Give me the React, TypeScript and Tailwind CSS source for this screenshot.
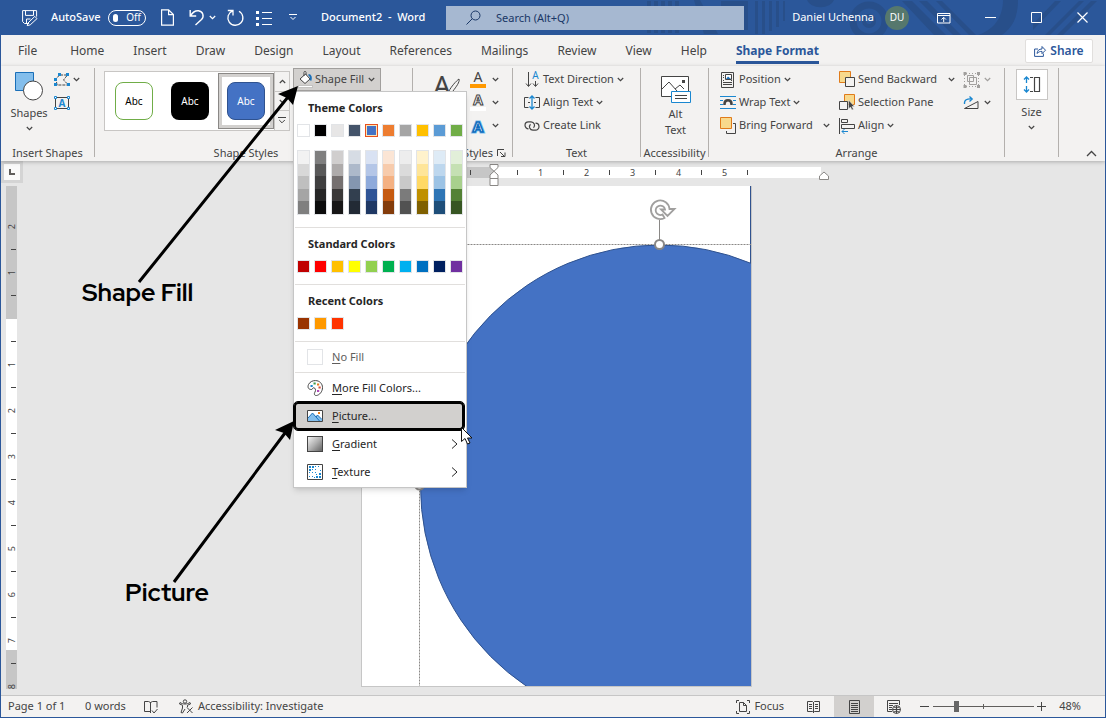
import type { ReactNode } from "react";

type Children = { children?: ReactNode };

function Icon({ w = 16, h = 16, children }: Children & { w?: number; h?: number }) {
  return (
    <svg width={w} height={h} viewBox={`0 0 ${w} ${h}`} fill="none" stroke="currentColor" className="shrink-0 overflow-visible" aria-hidden="true">
      {children}
    </svg>
  );
}

function Chevron() {
  return (
    <Icon w={7} h={5}>
      <path d="M.8 1 3.5 3.7 6.2 1" strokeWidth="1.2" />
    </Icon>
  );
}

function TitleArt() {
  return (
    <svg width="470" height="35" viewBox="636 0 470 35" className="pointer-events-none absolute top-0 right-0" aria-hidden="true">
      <g fill="#284f8a">
        <path d="M648 1h4v32h-4zM655 1h4v32h-4zM662 1h4v32h-4zM669 1h4v32h-4zM676 1h4v32h-4zM695 0h6l18 34h-14zM722 1h27v29h-27z" />
        <path d="M756 1h3v33h-3zM763 1h3v33h-3zM770 1h3v30h-3zM777 1h3v26h-3zM784 1h2v20h-2z" />
        <path d="M808 0a14 10 0 0 0 27 0z" />
        <path d="M903 1h10l34 34h-12zM920 1h8l34 34h-8zM937 1h6l34 34h-7z" />
        <path d="M1004 0h15c0 18-6 28-16 35h-24c16-5 25-18 25-35z" />
        <path d="M1046 35 1080 1h5l-34 34zM1058 35l34-34h6l-34 34zM1034 24l22-23h6l-28 29z" />
      </g>
      <g fill="none" stroke="#284f8a">
        <circle cx="870" cy="21" r="16" strokeWidth="7" />
        <circle cx="870" cy="21" r="5" strokeWidth="4" />
      </g>
    </svg>
  );
}

function TitleBar() {
  return (
    <header className="relative flex h-[35px] shrink-0 items-center bg-[#2b579a] text-[11px] text-white">
      <TitleArt />
      <button aria-label="Save" className="ml-[21px]">
        <Icon w={17}>
          <path d="M7 13.5H2.5L.6 11.6V.6h14v6M3.5.6v4.8h8V.6M4.5 13.5V9h4M6 13l6.8-6.6 2.2 2.2-6.8 6.3-3 .7z" />
        </Icon>
      </button>
      <span className="ml-3 w-[50px] whitespace-nowrap font-medium">AutoSave</span>
      <button role="switch" aria-checked="false" aria-label="AutoSave" className="ml-[7px] flex h-4 w-[38px] items-center gap-2 rounded-full border border-white px-1 text-[10px]">
        <span className="size-2 rounded-full bg-white" />
        Off
      </button>
      <button aria-label="New" className="ml-[15px]">
        <Icon w={13} h={17}>
          <path d="M.6.8h7l4.8 4.8v10.6H.6zM7.6.8v4.8h4.8" strokeWidth="1.2" />
        </Icon>
      </button>
      <button aria-label="Undo" className="ml-[15px]">
        <Icon w={16} h={17}>
          <path d="M1.2 1v6h6M1.5 6.8C3.500 3.500 6.500 1.500 9.500 1.800c4.500.5 6 5.500 3 8.700L6.500 16" strokeWidth="1.4" />
        </Icon>
      </button>
      <button aria-label="Undo list" className="ml-1"><Chevron /></button>
      <button aria-label="Redo" className="ml-[11px]">
        <Icon w={17} h={17}>
          <path d="M.8 1.500H6v5M5.600 1.800A7.500 7.500 0 1 0 12 2.200" strokeWidth="1.300" />
        </Icon>
      </button>
      <button aria-label="Bullets" className="ml-3">
        <Icon>
          <path d="M6 2.500h10M6 8.500h10M6 14.500h10" />
          <path d="M0 1h3v3H0zM0 7h3v3H0zM0 13h3v3H0z" fill="currentColor" stroke="none" />
        </Icon>
      </button>
      <button aria-label="Customize quick access toolbar" className="ml-[17px]">
        <Icon w={8} h={7}>
          <path d="M0 .5h8M1.500 3 4 5.500 6.500 3" />
        </Icon>
      </button>
      <span className="ml-6 w-[125px] whitespace-pre font-medium">Document2  -  Word</span>
      <div className="relative h-6 w-[298px]">
        <input aria-label="Search" placeholder="Search (Alt+Q)" className="size-full bg-[#a6b8d1] pl-[50px] placeholder:text-[#1a3766]" />
        <div className="pointer-events-none absolute top-1 left-5 text-[#1a3766]">
          <Icon>
            <circle cx="9.500" cy="5.500" r="4.500" />
            <path d="M6.300 8.700.5 14.500" />
          </Icon>
        </div>
      </div>
      <div className="relative ml-auto flex items-center">
        <span className="whitespace-nowrap">Daniel Uchenna</span>
        <span className="ml-[11px] flex size-6 items-center justify-center rounded-full bg-[#56786d] text-[10px]">DU</span>
        <button aria-label="Ribbon display options" className="ml-7">
          <Icon w={14} h={12}>
            <path d="M.5 1.500h12.500v9.500H.5zM.5 3.500h12.500M6.700 10V5.500M4.500 7.500l2.200-2.200 2.200 2.200" />
          </Icon>
        </button>
        <button aria-label="Minimize" className="ml-[34px]">
          <Icon w={11} h={11}><path d="M0 5.500h11" /></Icon>
        </button>
        <button aria-label="Maximize" className="ml-[35px]">
          <Icon w={11} h={11}><path d="M.5.5h10v10H.5z" /></Icon>
        </button>
        <button aria-label="Close" className="mr-[17px] ml-[35px]">
          <Icon w={11} h={11}><path d="m.5.5 10 10m0-10-10 10" strokeWidth="1.200" /></Icon>
        </button>
      </div>
    </header>
  );
}

const tabs = ["Home", "Insert", "Draw", "Design", "Layout", "References", "Mailings", "Review", "View", "Help"];

function Tabs() {
  return (
    <nav className="flex h-[31px] shrink-0 items-center pr-3 pl-[17px] text-xs">
      <button className="mr-[33px]">File</button>
      <div className="flex gap-[29px]">
        {tabs.map((tab) => (
          <button key={tab}>{tab}</button>
        ))}
        <button className="relative font-bold whitespace-nowrap text-[#2b579a]">
          Shape Format
          <span className="absolute inset-x-0 top-[18px] h-[3px] bg-[#2b579a]" />
        </button>
      </div>
      <button className="ml-auto flex h-6 w-[68px] items-center justify-center gap-1 rounded-xs border border-[#e1dfdd] bg-white font-semibold text-[#2b579a]">
        <Icon w={12} h={12}>
          <path d="M4 4H.6v7.400h8.800V8.500M3 8.500c.3-3 2-4.500 5-4.500V1.500l3.500 3.700L8 8.700V6.400C6 6.300 4.300 7 3 8.500z" />
        </Icon>
        Share
      </button>
    </nav>
  );
}

function Group({ label, className, launcher, children }: Children & { label: string; className: string; launcher?: boolean }) {
  return (
    <section className={`flex shrink-0 flex-col justify-between border-r border-[#b3b0ad] ${className}`}>
      <div>{children}</div>
      <div className="flex items-center justify-center text-center leading-2 whitespace-nowrap">
        <span className="flex-1">{label}</span>
        {launcher && (
          <button aria-label={`${label} options`} className="-mt-px w-[15px]">
            <Icon w={9} h={8}>
              <path d="M.5 7V.5H7M3 3l4.500 4.500M8 3.500v4H4" />
            </Icon>
          </button>
        )}
      </div>
    </section>
  );
}

function Command({ icon, label, arrow, labelClass = "" }: { icon: ReactNode; label?: string; arrow?: boolean; labelClass?: string }) {
  return (
    <button className="flex h-[23px] items-center gap-[3px] text-left whitespace-nowrap">
      {icon}
      {label && <span className={labelClass}>{label}</span>}
      {arrow && <Chevron />}
    </button>
  );
}

function InsertShapes() {
  return (
    <Group label="Insert Shapes" className="w-[94px]">
      <div className="flex gap-1.5 pl-[9px]">
        <button className="flex w-[38px] flex-col items-center pt-1">
          <Icon w={28} h={29}>
            <path d="M.5.5h18v18H.5z" fill="#83beec" stroke="#1a6fb8" />
            <circle cx="18" cy="18.500" r="9.500" fill="#fff" stroke="#444" />
          </Icon>
          <span className="my-1">Shapes</span>
          <Chevron />
        </button>
        <div>
          <Command
            arrow
            icon={
              <Icon w={16} h={14}>
                <path d="M3 12 2 6l3.500-4h8L9.500 7l5 5H3" strokeDasharray="3 1" />
                <path d="M4 0h3v3H4zM12 0h3v3h-3zM0 5h3v3H0zM0 10h3v3H0zM13 10h3v3h-3z" fill="#1a87d0" stroke="none" />
              </Icon>
            }
          />
          <Command
            icon={
              <Icon w={16} h={14}>
                <path d="M1.500 1.500h13v11h-13z" />
                <path d="M.5.5h2v2h-2zM13.500.5h2v2h-2zM.5 11.500h2v2h-2zM13.500 11.500h2v2h-2z" fill="#fff" stroke="#1a87d0" />
                <text x="8" y="11" textAnchor="middle" fontSize="10" fontWeight="700" fill="#1a87d0" stroke="none">A</text>
              </Icon>
            }
          />
        </div>
      </div>
    </Group>
  );
}

const themeColors = [
  ["#ffffff", "#f2f2f2", "#d8d8d8", "#bfbfbf", "#a5a5a5", "#7f7f7f"],
  ["#000000", "#7f7f7f", "#595959", "#3f3f3f", "#262626", "#0c0c0c"],
  ["#e7e6e6", "#d0cece", "#aeabab", "#757070", "#3a3838", "#171616"],
  ["#44546a", "#d6dce4", "#adb9ca", "#8496b0", "#323f4f", "#222a35"],
  ["#4472c4", "#d9e2f3", "#b4c6e7", "#8eaadb", "#2f5496", "#1f3864"],
  ["#ed7d31", "#fbe5d5", "#f7cbac", "#f4b183", "#c55a11", "#833c0b"],
  ["#a5a5a5", "#ededed", "#dbdbdb", "#c9c9c9", "#7b7b7b", "#525252"],
  ["#ffc000", "#fff2cc", "#fee599", "#ffd965", "#bf9000", "#7f6000"],
  ["#5b9bd5", "#deebf6", "#bdd7ee", "#9cc3e5", "#2e75b5", "#1e4e79"],
  ["#70ad47", "#e2efd9", "#c5e0b3", "#a8d08d", "#538135", "#375623"],
];
const standardColors = ["#c00000", "#ff0000", "#ffc000", "#ffff00", "#92d050", "#00b050", "#00b0f0", "#0070c0", "#002060", "#7030a0"];
const recentColors = ["#993300", "#ff9900", "#ff3300"];

function Swatches({ colors, selected }: { colors: string[]; selected?: string }) {
  return (
    <div className="flex gap-1 pl-[3px]">
      {colors.map((color) => (
        <button
          key={color}
          aria-label={color}
          className={`size-[13px] border ${color === selected ? "border-[#e8501c] inset-ring inset-ring-[#fbe3b5]" : "border-[#e2e4e7]"}`}
          style={{ backgroundColor: color }}
        />
      ))}
    </div>
  );
}

function MenuItem({ icon, label, arrow, className = "h-7 w-full" }: { icon: ReactNode; label: string; arrow?: boolean; className?: string }) {
  return (
    <button className={`flex items-center gap-[9px] pr-2 pl-[13px] text-left ${className}`}>
      {icon}
      <span className="flex-1">
        <u className="underline-offset-2">{label[0]}</u>
        {label.slice(1)}
      </span>
      {arrow && (
        <Icon w={7} h={10}>
          <path d="m1 .5 5 4.500-5 4.500" />
        </Icon>
      )}
    </button>
  );
}

function FillMenu() {
  return (
    <div className="absolute top-[23px] left-0 z-10 w-[174px] border border-[#c6c6c6] bg-white pb-px text-[11px] text-[#262626] shadow-md">
      <h2 className="flex h-8 items-center pl-3.5 font-bold">Theme Colors</h2>
      <Swatches colors={themeColors.map((shades) => shades[0])} selected="#4472c4" />
      <div className="mt-[13px] mb-3 flex gap-1 pl-[3px]">
        {themeColors.map(([base, ...shades]) => (
          <div key={base} className="flex h-[65px] w-[13px] flex-col border border-[#e2e4e7]">
            {shades.map((shade) => (
              <button key={shade} aria-label={shade} className="flex-1" style={{ backgroundColor: shade }} />
            ))}
          </div>
        ))}
      </div>
      <hr className="mx-px border-[#e1dfdd]" />
      <h2 className="flex h-8 items-center pl-3.5 font-bold">Standard Colors</h2>
      <Swatches colors={standardColors} />
      <hr className="mx-px mt-[11px] border-[#e1dfdd]" />
      <h2 className="flex h-8 items-center pl-3.5 font-bold">Recent Colors</h2>
      <Swatches colors={recentColors} />
      <hr className="mx-px mt-[11px] border-[#e1dfdd]" />
      <MenuItem className="h-[30px] w-full text-[#605e5c]" label="No Fill" icon={<span className="size-4 border border-[#e2e4e7]" />} />
      <hr className="mx-px mb-px border-[#e1dfdd]" />
      <MenuItem
        label="More Fill Colors..."
        icon={
          <Icon>
            <path d="M4.500 9.500C1 9.500.5 7 1.500 4.500 3 1.500 6 .5 8.500.6c4 0 7 3 7 7s-3 7.500-6 7.900c-2.500.2-2.500-2-1.500-3.500 1.500-2.500-.5-5-2-4-1 .7-.5 1.500-1.500 1.500z" fill="#fff" stroke="#444" />
            <path d="M3.500 5h2.200v2H3.500z" fill="#1a87d0" stroke="none" />
            <path d="M6.500 2.500h2.200v2H6.500z" fill="#3a9b4c" stroke="none" />
            <path d="M10 3.500h2.200v2H10z" fill="#e87d1c" stroke="none" />
            <path d="M11.500 6.500h2.200v2h-2.200z" fill="#d84a3a" stroke="none" />
            <path d="M10 10h2.200v2H10z" fill="#b046b8" stroke="none" />
          </Icon>
        }
      />
      <MenuItem
        className="h-7 w-[170px] rounded-sm bg-[#d2d0ce] inset-ring-2 inset-ring-black outline outline-black"
        label="Picture..."
        icon={
          <Icon h={12}>
            <path d="M.5.5h15v11H.5z" fill="#fff" stroke="#444" />
            <path d="m1 8 4.500-5 3.300 3.500L10.500 5 15 9.500V11H1z" fill="#83beec" stroke="none" />
            <path d="m1 8 4.500-5 7 8M9 7l1.500-2L15 9.500" stroke="#1a6fb8" />
            <path d="M11 2h2v2h-2z" fill="#e87d1c" stroke="none" />
          </Icon>
        }
      />
      <MenuItem
        arrow
        label="Gradient"
        icon={<span className="size-4 border border-[#444] bg-linear-to-br from-[#f3f3f3] via-[#b0b0b0] to-[#666]" />}
      />
      <MenuItem
        arrow
        label="Texture"
        icon={
          <Icon>
            <path d="M.5.5h15v15H.5z" fill="#fff" stroke="#444" />
            <path
              d="M2 2h2v2H2zM5 2h2v2H5zM8 2h1v1H8zM11 2h1v1h-1zM2 5h2v2H2zM5 5h1v1H5zM2 8h1v1H2zM8 5h1v1H8zM13 6h1v1h-1zM5 8h1v1H5zM8 8h1v1H8zM12 9h2v2h-2zM9 12h2v2H9zM12 12h2v2h-2zM9 10h1v1H9zM5 12h1v1H5zM7 13h1v1H7zM2 12h1v1H2z"
              fill="#1a87d0"
              stroke="none"
            />
          </Icon>
        }
      />
    </div>
  );
}

function ShapeStyles() {
  return (
    <Group label="Shape Styles" launcher className="w-[318px]">
      <div className="flex gap-[3px] pl-[9px]">
        <div className="mt-[3px] flex h-[60px] w-[186px] border border-[#c8c6c4] bg-white">
          <div className="flex flex-1 items-center text-[10px]">
            <button className="mx-[10px] size-[38px] rounded-lg border border-[#70ad47] text-black">Abc</button>
            <button className="mr-[9px] ml-2 size-[38px] rounded-lg bg-black text-white">Abc</button>
            <button className="flex size-14 items-center justify-center border border-[#8a8886] bg-white inset-ring-3 inset-ring-[#d2d0ce]">
              <span className="flex size-[38px] shrink-0 items-center justify-center rounded-lg border border-[#2f528f] bg-[#4472c4] text-white">Abc</span>
            </button>
          </div>
          <div className="flex w-[15px] flex-col divide-y divide-[#c8c6c4] border-l border-[#c8c6c4] bg-[#f3f2f1]">
            <button aria-label="Previous row" className="flex flex-1 items-center justify-center">
              <Icon w={7} h={5}><path d="M.8 4 3.500 1.300 6.200 4" strokeWidth="1.200" /></Icon>
            </button>
            <button aria-label="Next row" className="flex flex-1 items-center justify-center"><Chevron /></button>
            <button aria-label="More styles" className="flex flex-1 items-center justify-center">
              <Icon w={8} h={7}><path d="M0 .5h8M1.200 3 4 5.800 6.800 3" /></Icon>
            </button>
          </div>
        </div>
        <div className="relative">
          <button className="flex h-[23px] w-[88px] items-center gap-px border border-[#a19f9d] bg-[#d2d0ce] pl-[3px] whitespace-nowrap">
            <Icon w={17} h={17}>
              <path d="m3 8 5.500-5 4.500 5-5 4.500zM7 5V1.500C7 0 9 0 9 1.500V4" fill="#fff" stroke="#444" />
              <path d="M11.500 4c2 0 3 2.500 2 5.500" stroke="#1a6fb8" strokeWidth="2" />
              <path d="M1.500 14.500h14v2h-14z" fill="#fff" stroke="#a19f9d" strokeWidth=".5" />
            </Icon>
            Shape Fill
            <span className="ml-[3px]"><Chevron /></span>
          </button>
          <FillMenu />
        </div>
      </div>
    </Group>
  );
}

function WordArtStyles() {
  return (
    <Group label="WordArt Styles" launcher className="w-[100px]">
      <div className="flex items-start justify-between pr-[13px] pl-5">
        <button aria-label="Quick styles" className="pt-1.5">
          <Icon w={28} h={28}>
            <text x="0" y="22" fontSize="28" fill="currentColor" stroke="none">A</text>
            <path d="M16 17c2-4 7-10 10-12 1 3-3 8-6 12-1 2-3 3-5 3" fill="#f3f2f1" />
          </Icon>
        </button>
        <div>
          <button aria-label="Text fill" className="flex h-[23px] items-center gap-1.5">
            <Icon w={16} h={17}>
              <text x="8" y="11" textAnchor="middle" fontSize="14" fill="currentColor" stroke="none">A</text>
              <path d="M0 13h16v4H0z" fill="#ff9900" stroke="none" />
            </Icon>
            <Chevron />
          </button>
          <button aria-label="Text outline" className="flex h-[23px] items-center gap-1.5">
            <Icon w={16} h={17}>
              <text x="8" y="11" textAnchor="middle" fontSize="14" fontWeight="700" fill="#fff" stroke="#444">A</text>
              <path d="M0 13h16v4H0z" fill="#fff" stroke="none" />
            </Icon>
            <Chevron />
          </button>
          <button aria-label="Text effects" className="flex h-[23px] items-center gap-1.5">
            <Icon>
              <text x="8" y="13.500" textAnchor="middle" fontSize="15" fontWeight="700" fill="#fff" stroke="#7cc0ee" strokeWidth="3">A</text>
              <text x="8" y="13.500" textAnchor="middle" fontSize="15" fontWeight="700" fill="#fff" stroke="#0f6cbd" strokeWidth="1.500">A</text>
            </Icon>
            <Chevron />
          </button>
        </div>
      </div>
    </Group>
  );
}

function TextGroup() {
  return (
    <Group label="Text" className="w-[128px]">
      <div className="flex flex-col items-start pl-[11px]">
        <Command
          arrow
          label="Text Direction"
          icon={
            <Icon w={16} h={17}>
              <path d="M4.500 1v14M2 12.500l2.500 3 2.500-3M11.500 10v5M9 12.500l2.500 3 2.500-3" />
              <text x="11.500" y="8" textAnchor="middle" fontSize="10" fill="#1a87d0" stroke="none">A</text>
            </Icon>
          }
        />
        <Command
          arrow
          label="Align Text"
          icon={
            <Icon w={16} h={15}>
              <path d="M4.500 2.500h-4v10h4M11.500 2.500h4v10h-4M4 7.500h2M10 7.500h2" />
              <path d="M8 1v13M5.500 3.500 8 1l2.500 2.500M5.500 11.500 8 14l2.500-2.500" stroke="#1a87d0" strokeWidth="1.300" />
            </Icon>
          }
        />
        <Command
          label="Create Link"
          icon={
            <Icon w={16} h={12}>
              <path d="M4.500 8.800a3.500 3.500 0 0 1 0-7H7a3.500 3.500 0 0 1 2.500 6M11.500 3.200a3.500 3.500 0 0 1 0 7H9a3.500 3.500 0 0 1-2.500-6" strokeWidth="1.200" />
            </Icon>
          }
        />
      </div>
    </Group>
  );
}

function Arrange() {
  return (
    <Group label="Arrange" className="w-[296px]">
      <div className="flex pl-[11px]">
        <div className="flex w-[119px] flex-col items-start">
          <Command
            arrow
            label="Position"
            icon={
              <Icon>
                <path d="M1.500.5h12v15h-12zM3 8.500h1M3 10.500h9M3 12.500h9M3 3.500h1M3 5.500h1M11 8.500h1" />
                <path d="M5.500 2.500h6v5h-6z" fill="#fff" stroke="#444" />
                <path d="M6 7 8 4.500 11 7z" fill="#1a6fb8" stroke="none" />
              </Icon>
            }
          />
          <Command
            arrow
            label="Wrap Text"
            icon={
              <Icon h={15}>
                <path d="M0 1.500h16M0 5.500h3M13 5.500h3M0 9.500h3M13 9.500h3M0 13.500h16" stroke="#1a87d0" />
                <path d="M4.500 10V9c0-5 7-5 7 0v1" stroke="#444" strokeWidth="2.500" />
              </Icon>
            }
          />
          <Command
            arrow
            labelClass="w-[81px]"
            label="Bring Forward"
            icon={
              <Icon w={16} h={17}>
                <path d="M.5.5h11v11H.5z" fill="#f8d98c" stroke="#e07b1a" />
                <path d="M13 6.500h2.500v10h-9V14" />
              </Icon>
            }
          />
        </div>
        <div className="flex w-[124px] flex-col items-start">
          <Command
            arrow
            labelClass="w-[87px]"
            label="Send Backward"
            icon={
              <Icon w={16} h={17}>
                <path d="M.5.5h11v11H.5z" fill="#f8d98c" stroke="#e07b1a" />
                <path d="M6.500 6.500h9v9h-9z" fill="#f3f2f1" />
              </Icon>
            }
          />
          <Command
            label="Selection Pane"
            icon={
              <Icon w={16} h={17}>
                <path d="M5.500.5h10v10h-10z" fill="#f8d98c" stroke="#e07b1a" />
                <path d="M.5 7.500h8v8h-8z" fill="#f3f2f1" />
                <path d="M9.500 6v9l2-2 1.500 3 1.500-.700-1.500-2.800h2.500z" fill="#444" stroke="#f3f2f1" strokeWidth=".5" />
              </Icon>
            }
          />
          <Command
            arrow
            label="Align"
            icon={
              <Icon>
                <path d="M.5 0v16M2.500 1.500h6v3h-6zM2.500 6.500h13v4h-13z" />
                <path d="M9 13.500H3M5.500 11 3 13.500 5.500 16" stroke="#1a87d0" />
              </Icon>
            }
          />
        </div>
        <div className="flex flex-col items-start">
          <span className="text-[#a19f9d]">
            <Command
              arrow
              icon={
                <Icon w={18}>
                  <path d="M4.500 3.500h6v6h-6zM6.500 5.500h7v7h-7z" />
                  <path d="M3 1.500h11M3 14.500h11M1.500 3v10M15.500 3v10" strokeDasharray="1 2" />
                  <path d="M.5 0h3v3h-3zM14 0h3v3h-3zM.5 13h3v3h-3zM14 13h3v3h-3z" fill="currentColor" stroke="none" />
                </Icon>
              }
            />
          </span>
          <Command
            arrow
            icon={
              <Icon w={18} h={14}>
                <path d="M1.500 12.500h13.500v-7z" />
                <path d="M1.500 8C1 4 4 2.500 9 3M6.500.5 9.200 3 6.500 5.500" stroke="#1a87d0" strokeWidth="1.300" />
              </Icon>
            }
          />
        </div>
      </div>
    </Group>
  );
}

function Ribbon() {
  return (
    <div className="relative z-10 flex h-[95px] shrink-0 pt-0.5 pb-1 text-[11px] shadow-[0_1px_4px_rgba(0,0,0,0.25)]">
      <InsertShapes />
      <ShapeStyles />
      <WordArtStyles />
      <TextGroup />
      <Group label="Accessibility" className="w-[68px]">
        <button className="flex w-full flex-col items-center pt-2 pl-0.5 leading-4">
          <Icon w={30} h={28}>
            <path d="M.5.5h27v20H.5z" fill="#fff" />
            <path d="m1 13 7-7 8 9M14 13l5-4 4 4" />
            <path d="M21 4h3v3h-3z" fill="#444" stroke="none" />
            <path d="M10.500 15.500h19v11h-19z" fill="#fff" stroke="#1a87d0" />
            <path d="M14 19.500h12M14 22.500h12" />
          </Icon>
          <span className="mt-0.5">Alt</span>
          <span>Text</span>
        </button>
      </Group>
      <Arrange />
      <section className="w-[54px] shrink-0 border-r border-[#b3b0ad]">
        <button className="flex w-full flex-col items-center">
          <span className="mt-px flex h-[31px] w-8 items-center justify-center border border-[#c8c6c4] bg-white">
            <Icon w={16} h={17}>
              <path d="M2.500 1v6M0 3.500 2.500 1 5 3.500M2.500 10v6M0 13.500 2.500 16 5 13.500" stroke="#1a87d0" strokeWidth="1.300" />
              <path d="M6 1.500h3M6 15.500h3M10.500 1.500h5v14h-5z" strokeWidth="1.200" />
            </Icon>
          </span>
          <span className="my-1">Size</span>
          <Chevron />
        </button>
      </section>
      <button aria-label="Collapse the ribbon" className="mr-2 ml-auto self-end">
        <Icon w={11} h={7}><path d="m1 6 4.500-4.500L10 6" strokeWidth="1.300" /></Icon>
      </button>
    </div>
  );
}

const verticalMarks = ["2", "", "1", "", "·", "", "1", "", "2", "", "3", "", "4", "", "5", "", "6", "", "7", "", "8"];

function Document() {
  return (
    <main className="flex min-h-0 flex-1 overflow-hidden bg-[#e6e6e6]">
      <div className="flex w-[22px] shrink-0 flex-col text-[9px]">
        <div className="flex h-[22px] shrink-0 items-center justify-center bg-[#d4d4d4]">
          <span className="flex size-4 items-center justify-center bg-[#fafafa] text-[#605e5c]">
            <Icon w={6} h={6}><path d="M1 0v5h5" strokeWidth="2" /></Icon>
          </span>
        </div>
        <div className="mt-[3px] mb-[6px] ml-[5px] min-h-0 w-[11px] flex-1 overflow-hidden bg-[linear-gradient(#c6c6c6_133px,#fff_133px,#fff_464px,#c6c6c6_464px)] pt-[29px]">
          {verticalMarks.map((mark, i) => (
            <div key={i} className="flex h-[23px] items-center justify-center">
              {mark === "" ? <span className="ml-1 h-px w-[5px] bg-[#444]" /> : mark === "·" ? null : <span className="-rotate-90">{mark}</span>}
            </div>
          ))}
        </div>
      </div>
      <div className="flex flex-1 flex-col pt-[6px] pl-[338px]">
        <div className="relative flex h-[11px] w-[460px] shrink-0 text-[9px]">
          <div className="flex w-[133px] items-center justify-end bg-[#c6c6c6] pr-3">
            <span className="flex w-[23px] justify-center"><span className="h-[5px] w-px bg-[#444]" /></span>
          </div>
          <div className="flex flex-1 items-center bg-white pl-3">
            {["", "1", "", "2", "", "3", "", "4", "", "5", ""].map((mark, i) => (
              <span key={i} className="flex w-[23px] justify-center">{mark || <span className="h-[5px] w-px bg-[#444]" />}</span>
            ))}
          </div>
          <div className="absolute -top-[3px] left-32 text-[#8a8886]">
            <Icon w={10} h={23}>
              <path d="M1 .5h8v3L1 11v3.500h8V11L1 3.500zM1 14.500h8v7H1z" fill="#fff" />
            </Icon>
          </div>
          <div className="absolute top-1 -right-2 text-[#8a8886]">
            <Icon w={10} h={10}><path d="M.5 8.500V5L5 1l4.500 4v3.500z" fill="#fff" /></Icon>
          </div>
        </div>
        <div className="mt-[8px] mb-2 min-h-0 w-[391px] flex-1 overflow-hidden border border-t-0 border-[#c6c6c6] bg-white">
          <svg width="389" height="500" viewBox="362 186 389 500" fill="none" aria-hidden="true">
            <ellipse cx="659.500" cy="486" rx="239" ry="241" fill="#4472c4" stroke="#2f528f" />
            <path d="M750.500 186v77" stroke="#2f528f" />
            <path d="M419.500 244.500H751M419.500 244.500V686" stroke="#8a8886" strokeDasharray="2 1" />
            <path d="M659.500 220v20" stroke="#8a8886" />
            <circle cx="659.500" cy="244.500" r="4.500" fill="#fff" stroke="#8a8886" strokeWidth="2" />
            <circle cx="419.500" cy="485" r="4.500" fill="#fff" stroke="#8a8886" strokeWidth="2" />
            <path d="M664.500 218a9.300 9.300 0 1 1 5-9h5l-7 7-6.500-6.500h4a4.700 4.700 0 1 0-2.500 5z" fill="#fff" stroke="#a09f9e" strokeWidth="1.800" />
          </svg>
        </div>
      </div>
    </main>
  );
}

function StatusBar() {
  return (
    <footer className="flex h-[22px] shrink-0 items-center border-t border-[#c6c6c6] text-[11px] whitespace-nowrap">
      <span className="ml-[7px] w-[77px]">Page 1 of 1</span>
      <span className="w-[59px]">0 words</span>
      <button aria-label="Proofing">
        <Icon w={14} h={14}>
          <path d="M6.500 2v11M6.500 11.500H.5v-10h4l2 1 2-1H13v6M8 10.500l2 2.500 3.500-4" />
        </Icon>
      </button>
      <button className="ml-[21px] flex items-center gap-1">
        <Icon w={15} h={15}>
          <circle cx="6" cy="2.500" r="1.700" />
          <path d="M1 3.500c3 2 7 2 10 0l.5 1.500-3 1.200v2M1 3.500.5 5l3 1.200V9L2 13.500l1.500.5L6 10M8 8.500l5.500 5.500M13.500 8.500 8 14" />
        </Icon>
        Accessibility: Investigate
      </button>
      <button className="ml-auto flex items-center gap-[3px]">
        <Icon w={14} h={14}>
          <path d="M3 .5H.5V3M11 .5h2.500V3M3 13.500H.5V11M11 13.500h2.500V11M3.500 2.500h4l3 3v6h-7zM7.500 2.500v3h3" />
        </Icon>
        <span className="w-8">Focus</span>
      </button>
      <button aria-label="Read mode" className="ml-[22px]">
        <Icon w={13} h={13}>
          <path d="M6.500 2v11M.5 1.500h5l1 1 1-1h5v10h-5l-1 1-1-1h-5zM2 4.500h3M2 6.500h3M2 8.500h3M8 4.500h3M8 6.500h3M8 8.500h3" />
        </Icon>
      </button>
      <button aria-label="Print layout" className="ml-3.5 flex h-full w-10 items-center justify-center bg-[#d2d0ce]">
        <Icon w={11} h={14}>
          <path d="M.5.5h10v13H.5zM2 3.500h7M2 5.500h7M2 7.500h7M2 9.500h7M2 11.500h7" />
        </Icon>
      </button>
      <button aria-label="Web layout" className="ml-[13px]">
        <Icon w={14} h={14}>
          <path d="M5 11.500H.5V.5h12V5M2 3.500h9M2 5.500h4M2 7.500h3M2 9.500h3" />
          <circle cx="9.500" cy="9.500" r="4" fill="#f3f2f1" />
          <path d="M5.500 9.500h8M9.500 5.500v8M7 7c1.500 1 3.500 1 5 0M7 12c1.500-1 3.500-1 5 0" />
        </Icon>
      </button>
      <button aria-label="Zoom out" className="ml-[19px]">
        <Icon w={9} h={9}><path d="M0 4.500h9" /></Icon>
      </button>
      <div className="relative ml-1 flex w-[101px] items-center">
        <span className="absolute left-[50px] h-[5px] w-px bg-[#605e5c]" />
        <input
          type="range"
          aria-label="Zoom"
          min={0}
          max={100}
          defaultValue={22}
          className="relative h-[11px] w-full appearance-none bg-transparent [&::-webkit-slider-runnable-track]:h-px [&::-webkit-slider-runnable-track]:bg-[#605e5c] [&::-webkit-slider-thumb]:-mt-[5px] [&::-webkit-slider-thumb]:h-[11px] [&::-webkit-slider-thumb]:w-[5px] [&::-webkit-slider-thumb]:appearance-none [&::-webkit-slider-thumb]:bg-[#666]"
        />
      </div>
      <button aria-label="Zoom in" className="ml-[3px]">
        <Icon w={9} h={9}><path d="M0 4.500h9M4.500 0v9" /></Icon>
      </button>
      <button className="mr-6 ml-[13px]">48%</button>
    </footer>
  );
}

function Callouts() {
  return (
    <div className="pointer-events-none absolute inset-y-0 right-0 -left-px z-20 font-['Red_Hat_Display','Inter',sans-serif] text-[25px] leading-7 font-bold text-black">
      <svg width="480" height="600" className="absolute top-0 left-0" aria-hidden="true">
        <path d="M139 282 288 97M174 582 285 433" stroke="#000" strokeWidth="3" />
        <path d="m298 86-20 8 9 4 6 7zM294 421l-19 9 9 3 6 7z" />
        <path d="M461.500 427.500v14l3.500-3 2.500 5.500 2.500-1-2.500-5h4.500z" fill="#fff" stroke="#111" />
      </svg>
      <p className="absolute top-[279px] left-[82px]">Shape Fill</p>
      <p className="absolute top-[579px] left-[125px]">Picture</p>
    </div>
  );
}

export default function App() {
  return (
    <div className="relative flex h-screen flex-col overflow-hidden border-x border-b border-[#2b579a] bg-[#f3f2f1] font-['Noto_Sans','Open_Sans',sans-serif] text-[#444]">
      <TitleBar />
      <Tabs />
      <Ribbon />
      <Document />
      <StatusBar />
      <Callouts />
    </div>
  );
}
